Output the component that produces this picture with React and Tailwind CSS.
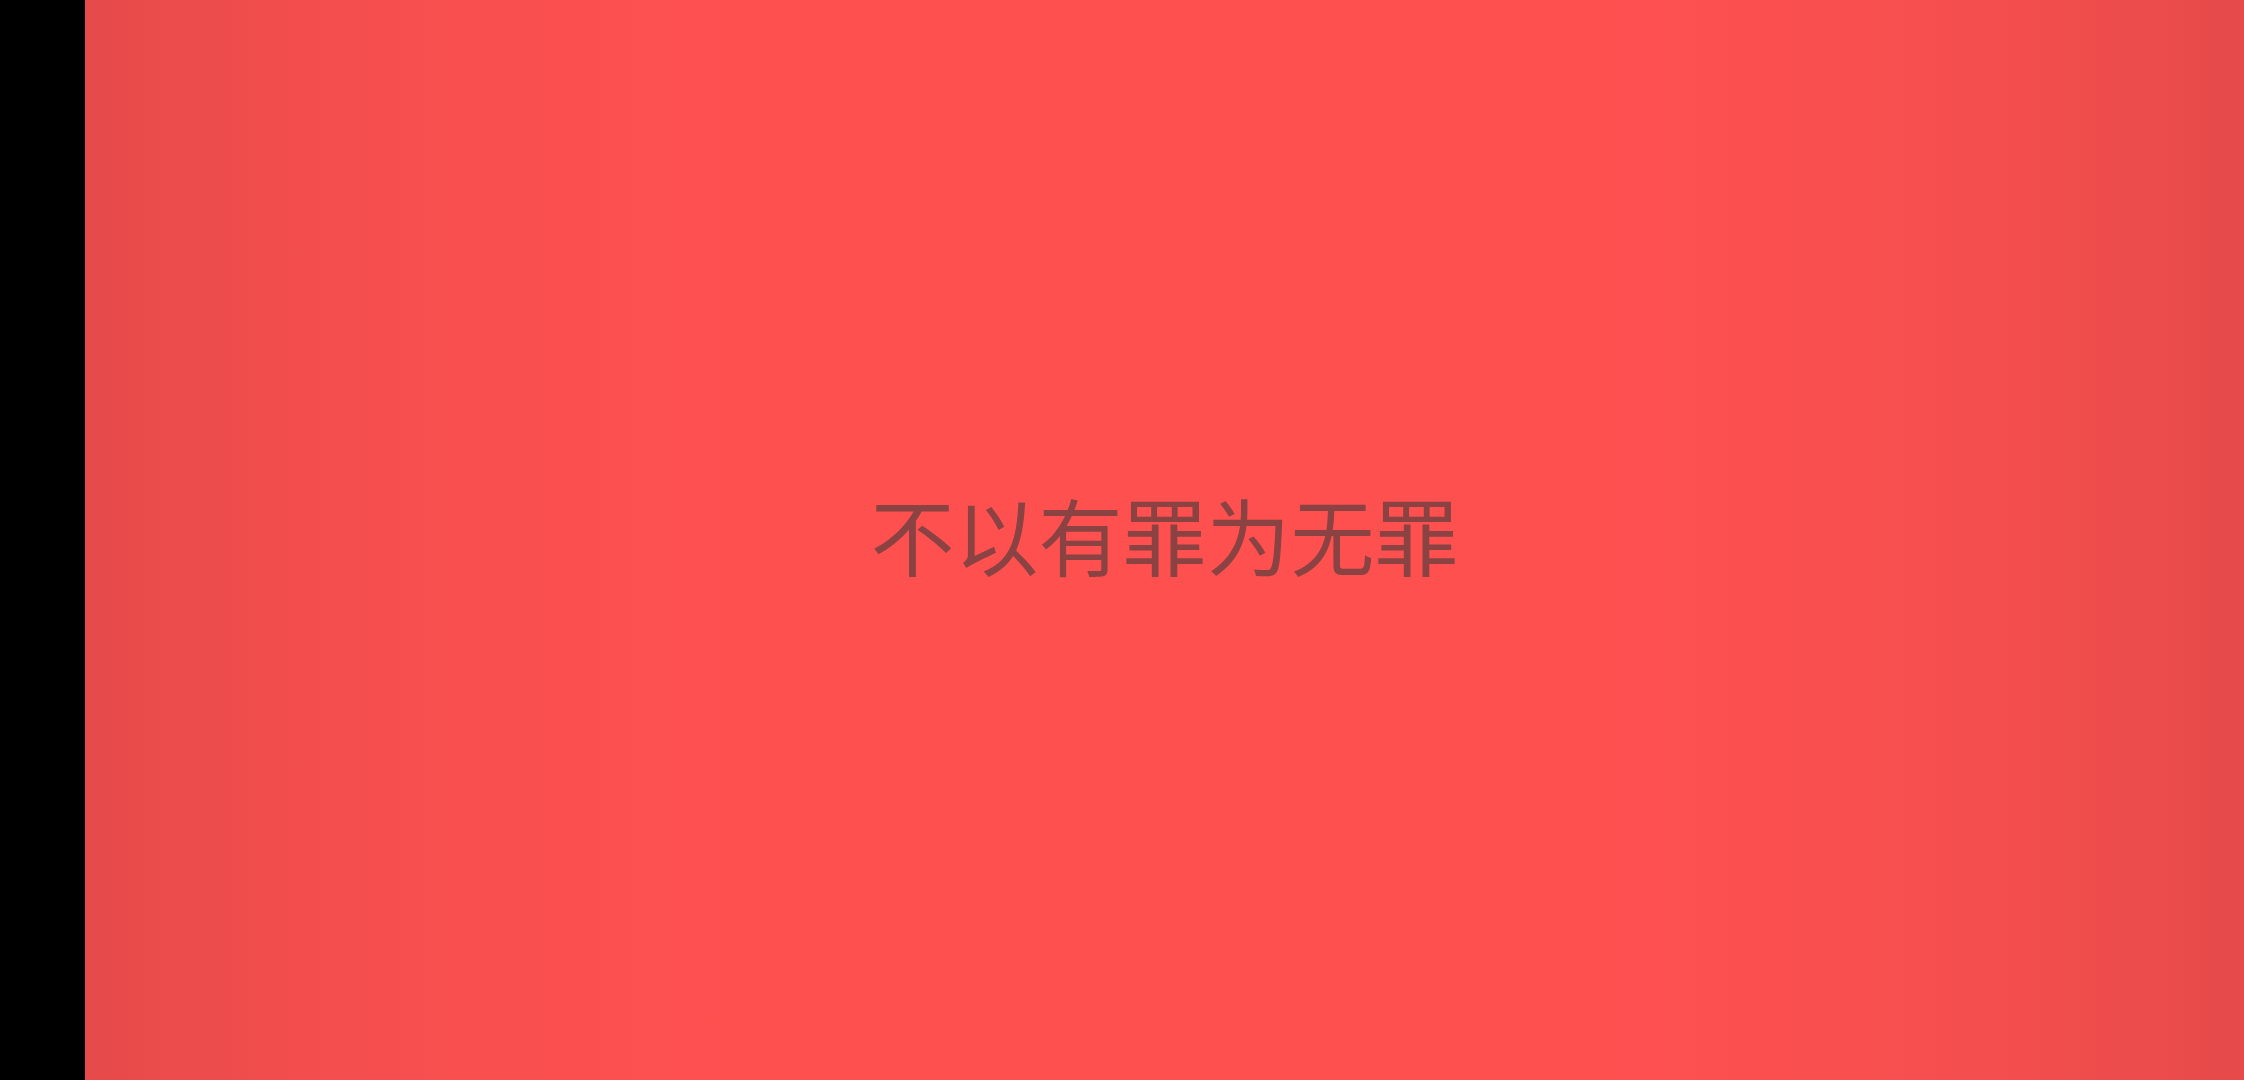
export default function App() {
  return (
    <div className="w-[2244px] h-[1080px] flex bg-black overflow-hidden">
      {/* left black strip */}
      <div className="w-[85px] h-full bg-black shrink-0" />

      {/* red stage, darker towards the side edges */}
      <main className="flex-1 h-full flex items-center justify-center bg-[#ff5050] bg-[linear-gradient(90deg,#e64a4a_0%,#f54e4e_12%,#ff5050_30%,#ff5050_70%,#f54e4e_88%,#e64a4a_100%)]">
        <h1
          className="text-[84px] leading-none text-[#8a4242] font-normal -mt-[12px]"
          style={{ fontFamily: '"Noto Sans CJK SC", "Noto Sans", sans-serif' }}
        >
          不以有罪为无罪
        </h1>
      </main>
    </div>
  );
}
